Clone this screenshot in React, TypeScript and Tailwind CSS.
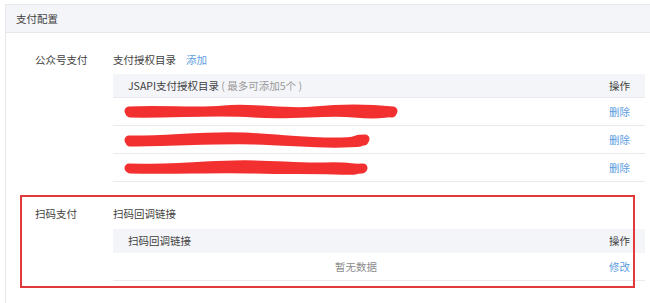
import React from "react";

const font = { fontFamily: '"Noto Sans CJK SC", "Noto Sans", sans-serif' };

function Scribble({ w, variant }: { w: number; variant: number }) {
  const d1 =
    variant === 0
      ? `M5 10 C 40 8, 70 12, 100 9 S 160 13, 190 10 S 240 7, ${w - 5} 10`
      : variant === 1
      ? `M5 11 C 40 12, 80 6, 120 8 S 180 13, 210 13 S ${w - 20} 10, ${w - 5} 10`
      : `M5 11 C 40 12, 70 9, 110 8 S 170 11, 200 10 S ${w - 20} 12, ${w - 5} 11`;
  const d2 =
    variant === 0
      ? `M6 12 C 50 13, 90 9, 130 12 S 200 9, 230 12 S ${w - 15} 11, ${w - 6} 12`
      : variant === 1
      ? `M6 13 C 50 13, 90 10, 130 11 S 190 15, 220 14 S ${w - 20} 13, ${w - 6} 12`
      : `M6 12 C 50 13, 90 11, 130 12 S 180 12, 210 13 S ${w - 20} 13, ${w - 6} 12`;
  return (
    <svg width={w} height={22} viewBox={`0 0 ${w} 22`} className="block">
      <path d={d1} stroke="#f2302f" strokeWidth={9} fill="none" strokeLinecap="round" />
      <path d={d2} stroke="#f2302f" strokeWidth={9} fill="none" strokeLinecap="round" />
    </svg>
  );
}

export default function App() {
  const rows = [
    { w: 274, v: 0 },
    { w: 246, v: 1 },
    { w: 244, v: 2 },
  ];
  return (
    <div className="relative w-[650px] h-[303px] overflow-hidden bg-white pt-[4px] pl-[5px] text-[10.5px] text-[#3f3f3f]" style={font}>
      <div className="w-[700px] h-[320px] border border-[#e6e8ec]">
        <div className="h-[28px] bg-[#f4f5f9] border-b border-[#e6e8ec] flex items-center pl-[10px]">支付配置</div>

        {/* 公众号支付 */}
        <div className="flex pt-[18px]">
          <div className="w-[107px] pl-[29px] leading-[18px]">公众号支付</div>
          <div className="w-[532px]">
            <div className="leading-[18px] flex gap-[10px]">
              <span>支付授权目录</span>
              <span className="text-[#5b9de0]">添加</span>
            </div>
            <div className="mt-[5px]">
              <div className="h-[24px] bg-[#f4f5f9] border-b border-[#e8eaee] flex items-center justify-between pl-[15px] pr-[15px]">
                <span>
                  JSAPI支付授权目录<span className="text-[#9a9a9a]"> ( 最多可添加5个 )</span>
                </span>
                <span>操作</span>
              </div>
              {rows.map((r, i) => (
                <div key={i} className="h-[28px] border-b border-[#e8eaee] flex items-center justify-between pl-[11px] pr-[15px]">
                  <Scribble w={r.w} variant={r.v} />
                  <span className="text-[#5b9de0]">删除</span>
                </div>
              ))}
            </div>
          </div>
        </div>

        {/* 扫码支付 */}
        <div className="flex pt-[23px]">
          <div className="w-[107px] pl-[29px] leading-[18px]">扫码支付</div>
          <div className="w-[532px]">
            <div className="leading-[18px]">扫码回调链接</div>
            <div className="mt-[6px]">
              <div className="h-[24px] bg-[#f4f5f9] flex items-center justify-between pl-[15px] pr-[15px]">
                <span>扫码回调链接</span>
                <span>操作</span>
              </div>
              <div className="h-[28px] border-b border-[#e8eaee] flex items-center justify-between pl-[222px] pr-[15px]">
                <span className="text-[#8c8c8c]">暂无数据</span>
                <span className="text-[#5b9de0]">修改</span>
              </div>
            </div>
          </div>
        </div>
      </div>

      {/* annotation box */}
      <div className="absolute left-[20px] top-[195px] w-[615px] h-[93px] border-2 border-[#e23a3a]" />
    </div>
  );
}
